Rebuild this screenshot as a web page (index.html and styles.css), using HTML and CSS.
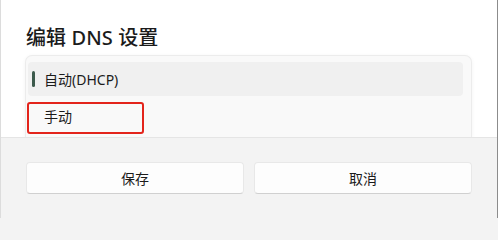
FILE: index.html
```html
<!DOCTYPE html>
<html lang="zh-CN">
<head>
<meta charset="utf-8">
<title>编辑 DNS 设置</title>
<link rel="stylesheet" href="styles.css">
</head>
<body>
<div class="dialog">
  <div class="dialog-body">
    <h1 class="title">编辑 DNS 设置</h1>
    <div class="flyout">
      <div class="item selected"><span class="accent"></span>自动(DHCP)</div>
      <div class="item">手动<span class="mark"></span></div>
    </div>
  </div>
  <div class="footer">
    <button class="btn">保存</button>
    <button class="btn">取消</button>
  </div>
</div>
</body>
</html>
```
FILE: styles.css
```css
html, body {
  margin: 0;
  padding: 0;
  background: #f3f3f3;
}
body {
  width: 498px;
  font-family: "Segoe UI", "Noto Sans", "Noto Sans CJK SC", sans-serif;
  color: #1b1b1b;
}
.dialog {
  width: 498px;
  height: 218px;
  box-sizing: border-box;
  border-left: 1px solid #dcdcdc;
  border-right: 1px solid #8c8c8c;
  display: flex;
  flex-direction: column;
  background: #ffffff;
}
.dialog-body {
  padding: 24px 25px 0 24px;
  height: 137px;
  box-sizing: border-box;
}
.title {
  margin: 0 0 0 1px;
  font-size: 20px;
  line-height: 28px;
  font-weight: 500;
  letter-spacing: 0.1px;
}
.flyout {
  margin-top: 3px;
  height: 82px;
  box-sizing: border-box;
  background: #f9f9f9;
  border: 1px solid #ececec;
  border-bottom: none;
  border-radius: 7px 7px 0 0;
  padding: 6px 8px 0 2px;
  box-shadow: 0 1px 4px rgba(0,0,0,0.05);
  display: flex;
  flex-direction: column;
  gap: 3px;
}
.item {
  position: relative;
  height: 34px;
  display: flex;
  align-items: center;
  padding-left: 16px;
  font-size: 14px;
  border-radius: 4px;
}
.item.selected {
  background: #f0f0f0;
}
.accent {
  position: absolute;
  left: 4px;
  top: 9px;
  width: 3px;
  height: 16px;
  border-radius: 2px;
  background: #3c5a4c;
}
.mark {
  position: absolute;
  left: -1px;
  top: 3px;
  width: 117px;
  height: 32px;
  box-sizing: border-box;
  border: 2px solid #e3241b;
  border-radius: 3px;
}
.footer {
  flex: 1;
  background: #f3f3f3;
  border-top: 1px solid #e5e5e5;
  padding: 24px 25px 0 25px;
  display: grid;
  grid-template-columns: 1fr 1fr;
  column-gap: 10px;
  align-content: start;
}
.btn {
  height: 32px;
  background: #fdfdfd;
  border: 1px solid #e8e8e8;
  border-bottom-color: #d0d0d0;
  border-radius: 4px;
  font-family: "Segoe UI", "Noto Sans", "Noto Sans CJK SC", sans-serif;
  font-size: 14px;
  color: #1b1b1b;
  padding: 0;
}
```
